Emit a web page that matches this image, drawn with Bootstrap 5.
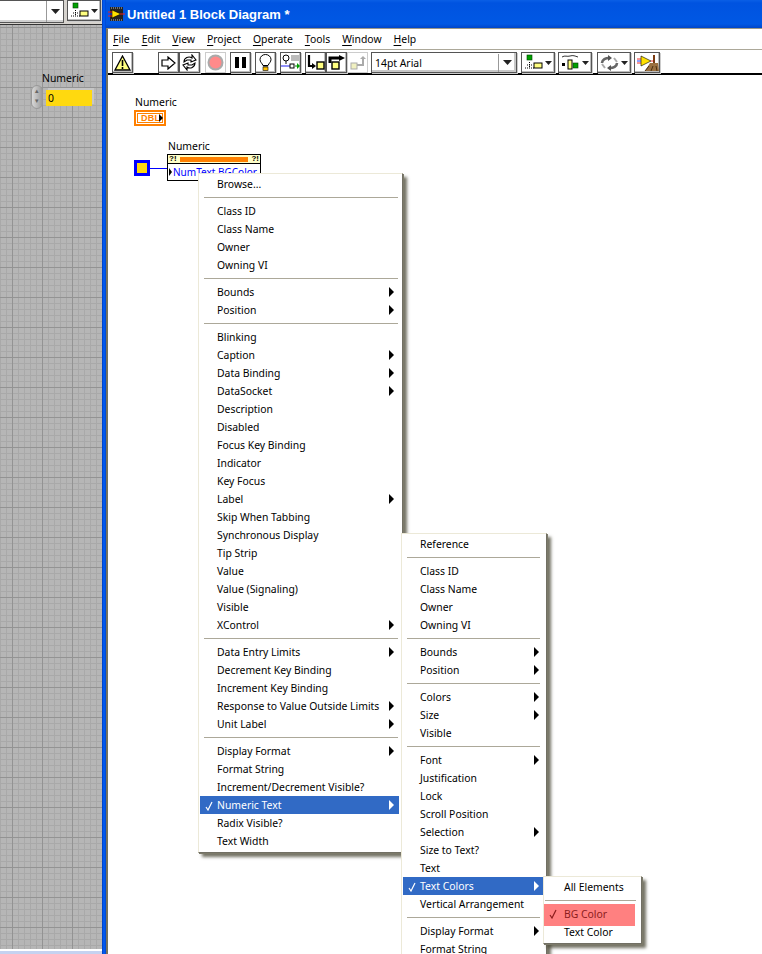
<!DOCTYPE html>
<html lang="en"><head><meta charset="utf-8"><title>Untitled 1 Block Diagram</title>
<link href="https://cdn.jsdelivr.net/npm/bootstrap@5.3.0/dist/css/bootstrap.min.css" rel="stylesheet">
<style>
html,body{margin:0;height:954px;overflow:hidden;background:#fff}
body{font:10.4px/18px "Noto Sans",sans-serif;color:#000;position:relative;width:762px}
.lv-left{width:102px;height:954px;flex:none;background:#c5d2f0}
.lv-topbar{height:25px;background:#d6d3ce;border-bottom:1px solid #333;padding-right:1px}
.lv-field{width:64px;height:23px;background:#fff;border:1px solid #555;border-left:0;display:flex;justify-content:flex-end;box-shadow:inset 0 -2px #d0d0d0}
.lv-arrow{width:17px;border-left:1px solid #999;display:flex;align-items:center;justify-content:center}
.lv-grid{height:924px;background-color:#b6b6b6;background-image:linear-gradient(#939393 1px,transparent 1px),linear-gradient(90deg,#939393 1px,transparent 1px),linear-gradient(#a9a9a9 1px,transparent 1px),linear-gradient(90deg,#a9a9a9 1px,transparent 1px);background-size:30px 30px,30px 30px,6px 6px,6px 6px;background-position:0 2px,12px 0,0 2px,0 0;position:relative}
.lv-endstrip{height:2px;background:#fff}
.lv-win{flex:1;height:954px;background:linear-gradient(#0a5fe6,#0053e0 3px,#0058e4 24px,#0046c8 28px);position:relative}
.lv-edge{position:absolute;inset:0 auto 0 0;width:4px;background:linear-gradient(90deg,#0033a8 0,#0058ee 1px,#0058ee 3px,#0040c0)}
.lv-title{height:28px;padding:1px 0 0 6px;gap:2px;color:#fff;font:bold 13px/27px "Liberation Sans",sans-serif}
.lv-body{position:absolute;left:4px;right:0;top:28px;bottom:0;background:#fff;border-left:2px solid #75735f;border-top:1px solid #9a9888}
.lv-menubar{height:21px;border-bottom:1px solid #aca899;gap:12px;padding-left:5px;line-height:20px}
.lv-menubar u{text-underline-offset:2px}
.lv-tools{height:25px;border-bottom:2px solid #000;padding:2px 0 0 4px;align-items:flex-start;background:#fff}
.tb{height:21px;width:21px;border:1px solid #555;box-shadow:inset -1px -1px #bdbdbd,1px 1px #ccc;background:#fff;flex:none;display:flex;align-items:center;justify-content:center}
.tb.off{border-color:#ccc;box-shadow:none}
.tb svg{display:block}
.g1{margin-left:25px}.g2{margin-left:5px}.g3{margin-left:4px}.g4{margin-left:3px}
.g5{margin-left:3px}
.tb-font{width:146px;justify-content:flex-start;padding-left:3px;line-height:18px;box-shadow:inset -2px -2px #c8c8c8,1px 1px #ccc}
.tb-font span{flex:1}
.tb-font i{width:17px;height:18px;border-left:1px solid #999;display:flex;align-items:center;justify-content:center;margin-right:1px}
.tb-drop{width:34px;gap:2px}
.tb-cl{width:26px}
.lv-canvas{position:absolute;left:0;right:0;top:47px;bottom:0}
.node{position:absolute}
.nlabel{line-height:13px}
.dbl{width:32px;height:16px;border:2px solid #ff8000;padding:1px;background:#fff;display:flex;align-items:center}
.dbl b{font:bold 9px/8px "Liberation Sans",sans-serif;color:#ff8000;letter-spacing:.3px;border:1px solid #ff8000;flex:1;padding-left:3px;height:10px;background:#fff}
.dbl i{width:0;height:0;border:4px solid transparent;border-left:4px solid #000;border-right:0;margin-left:-4px}
.term{width:16px;height:16px;border:3px solid #0000ff;background:#ffd90f}
.wire{width:18px;height:1px;background:#0000ff}
.prop{width:94px;height:27px;border:1px solid #000;background:#fff}
.prop-h{height:8px;background:#ffffc8;border-bottom:1px solid #000;display:flex;align-items:center;box-sizing:content-box;font:bold 8px/8px "Liberation Sans",sans-serif;padding:0 1px;justify-content:space-between}
.prop-h i{display:block;height:5px;width:68px;background:#ff8000}
.prop-r{color:#0000ff;line-height:16px;padding-left:1px;display:flex;align-items:center;gap:1px;font-size:10px}
.prop-r i{width:0;height:0;border:4px solid transparent;border-left:3px solid #000;border-right:0}
.sp{width:12px;height:24px;border-radius:6px;background:linear-gradient(90deg,#d8d8d8,#9d9d9d);border:1px solid #999;font-size:7px;line-height:10px;text-align:center;color:#666}
.dsp{width:46px;height:16px;background:#ffd90f;padding-left:2px;line-height:17px;box-shadow:2px -2px 0 #c6c6c6}
.wxmenu.dropdown-menu{display:block;position:absolute;border-radius:0;border:1px solid #ece9d8;border-right-color:#716f64;border-bottom-color:#716f64;background:#fff;padding:1px 3px 2px 1px;margin:0;min-width:0;font-size:10.4px;box-shadow:1px 1px 0 #7c7a6a,4px 4px 3px rgba(70,68,50,.75);color:#000}
.wxmenu .dropdown-item{height:18px;line-height:19px;padding:0 0 0 17px;color:#000;position:relative;white-space:nowrap;background:transparent}
.wxmenu .dropdown-divider{margin:4px;height:1px;border:0;background:#aca899;opacity:1}
.m1 .dropdown-divider{margin-right:1px}
.sub::after{content:"";position:absolute;right:5px;top:4px;border:5px solid transparent;border-left:5px solid #000;border-right:0}
.wxmenu .dropdown-item.act{background:#316ac5;color:#fff}
.act.sub::after{border-left-color:#fff}
.ck{position:absolute;left:5px;top:5px}
.m1{left:198px;top:173px;width:205px}
.m2{left:401px;top:533px;width:146px;height:430px;padding-right:2px!important}
.m3{left:543px;top:876px;width:99px;padding-left:0!important;padding-right:6px!important}
.m3 .dropdown-item{padding-left:20px}
.m3 .dropdown-divider{margin-left:1px;margin-right:-1px}
.wxmenu .dropdown-item.pink{background:#ff8080;color:#8c1c1c;height:22px;line-height:21px;margin-top:-1px;margin-bottom:-3px}
.m3 .tail{z-index:1}
</style></head><body>
<div class="d-flex">
<div class="lv-left">
 <div class="lv-topbar d-flex justify-content-between">
  <div class="lv-field"><div class="lv-arrow"><svg width="9" height="5"><path d="M0 0h9L4.500 5z" fill="#222"/></svg></div></div>
  <div class="tb tb-drop"><svg width="19" height="17" viewBox="0 0 19 17"><rect x="3" y="1" width="5" height="5" fill="#00a000" stroke="#004000" stroke-width=".6"/><path d="M5.500 8v6M3 11h5M1 14h10" stroke="#000" stroke-dasharray="1 1" fill="none"/><rect x="10" y="9" width="8" height="5" fill="#ffff80" stroke="#000"/></svg><svg width="7" height="4"><path d="M0 0h7L3.500 4z" fill="#222"/></svg></div>
 </div>
 <div class="lv-grid">
  <div class="node nlabel" style="left:42px;top:47px">Numeric</div>
  <div class="node sp" style="left:31px;top:60px">▴<br>▾</div>
  <div class="node dsp" style="left:46px;top:65px">0</div>
 </div>
 <div class="lv-endstrip"></div>
</div>
<div class="lv-win">
 <div class="lv-edge"></div>
 <div class="lv-title d-flex align-items-center">
  <svg width="17" height="15" viewBox="0 0 17 15"><rect x="2" y="0" width="13" height="14" fill="#222"/><path d="M3 1h11M3 13h11" stroke="#bbb" stroke-dasharray="1 1"/><path d="M4 3l9 4-9 4z" fill="#ffe000" stroke="#000" stroke-width=".6"/><path d="M0 5h4M0 9h4" stroke="#f02020"/><path d="M0 7h4" stroke="#2040ff"/><path d="M12 7h5" stroke="#f02020"/></svg>
  <span>Untitled 1 Block Diagram *</span>
 </div>
 <div class="lv-body">
  <div class="lv-menubar d-flex">
   <span><u>F</u>ile</span><span><u>E</u>dit</span><span><u>V</u>iew</span><span><u>P</u>roject</span><span><u>O</u>perate</span><span><u>T</u>ools</span><span><u>W</u>indow</span><span><u>H</u>elp</span>
  </div>
  <div class="lv-tools d-flex">
   <div class="tb"><svg width="17" height="16" viewBox="0 0 17 16"><path d="M8.500 1L16 15H1z" fill="#ffff80" stroke="#000" stroke-width="1.300"/><path d="M8.500 5v6M8.500 12v2" stroke="#000" stroke-width="1.600"/></svg></div>
   <div class="tb g1"><svg width="15" height="14" viewBox="0 0 15 14"><path d="M1 4h6V1l7 6-7 6v-3H1z" fill="#fff" stroke="#000" stroke-width="1.200"/></svg></div>
   <div class="tb"><svg width="17" height="17" viewBox="0 0 17 17"><path d="M3 8a5 5 0 0 1 8-4V1l4 5-5 2V6H6L3 8zM14 9a5 5 0 0 1-8 4v3l-4-5 5-2v2h4l3-2z" fill="#fff" stroke="#000" stroke-width="1.100"/></svg></div>
   <div class="tb off g2"><svg width="17" height="17" viewBox="0 0 17 17"><circle cx="8.500" cy="8.500" r="7" fill="#ff8a8a" stroke="#aaa" stroke-width="2"/></svg></div>
   <div class="tb g3"><svg width="11" height="11"><rect x="0" y="0" width="4" height="11" fill="#000"/><rect x="7" y="0" width="4" height="11" fill="#000"/></svg></div>
   <div class="tb g3"><svg width="13" height="17" viewBox="0 0 13 17"><path d="M4 11.500C3 9 1 8 1 5.500a5.500 5 0 0 1 11 0c0 2.500-2 3.500-3 6z" fill="#fff" stroke="#000"/><path d="M4 12h5" stroke="#000"/><rect x="4" y="13" width="5" height="3.500" fill="#ffc000" stroke="#000" stroke-width=".6"/></svg></div>
   <div class="tb g3"><svg width="19" height="17" viewBox="0 0 19 17"><circle cx="5" cy="4" r="3" fill="#fff" stroke="#000"/><path d="M5 7v3" stroke="#000"/><rect x="10" y="1" width="8" height="6" fill="#bbb"/><path d="M0 12h10" stroke="#2020f0"/><rect x="9" y="10" width="4" height="4" fill="#fff" stroke="#000"/><path d="M14 12h2" stroke="#008000"/><path d="M16 9l3 3-3 3z" fill="#00a000"/></svg></div>
   <div class="tb g3"><svg width="18" height="16" viewBox="0 0 18 16"><path d="M2 0v11h5" fill="none" stroke="#000" stroke-width="2.200"/><path d="M5 8l4 3-4 3z" fill="#000"/><rect x="10" y="7" width="7" height="7" fill="#ffff80" stroke="#000" stroke-width="1.400"/></svg></div>
   <div class="tb"><svg width="18" height="16" viewBox="0 0 18 16"><path d="M2 8V3h10" fill="none" stroke="#000" stroke-width="3"/><path d="M11 0l6 3-6 3z" fill="#000"/><rect x="4" y="7" width="7" height="7" fill="#ffff80" stroke="#000" stroke-width="1.400"/></svg></div>
   <div class="tb off"><svg width="18" height="16" viewBox="0 0 18 16"><rect x="2" y="8" width="6" height="6" fill="#f0f0c0" stroke="#aaa"/><path d="M8 10h6V3" fill="none" stroke="#aaa" stroke-width="2"/><path d="M11 4l3-3 3 3z" fill="#aaa"/></svg></div>
   <div class="tb tb-font g4"><span>14pt Arial</span><i><svg width="9" height="5"><path d="M0 0h9L4.500 5z" fill="#222"/></svg></i></div>
   <div class="tb tb-drop g3"><svg width="19" height="17" viewBox="0 0 19 17"><rect x="3" y="1" width="5" height="5" fill="#00a000" stroke="#004000" stroke-width=".6"/><path d="M5.500 8v6M3 11h5M1 14h10" stroke="#000" stroke-dasharray="1 1" fill="none"/><rect x="10" y="9" width="8" height="5" fill="#ffff80" stroke="#000"/></svg><svg width="7" height="4"><path d="M0 0h7L3.500 4z" fill="#222"/></svg></div>
   <div class="tb tb-drop g5"><svg width="19" height="17" viewBox="0 0 19 17"><path d="M1 3c3-2 5 0 8-1s5 0 8 1" fill="none" stroke="#000" stroke-width=".8"/><rect x="1" y="9" width="3" height="3" fill="#000"/><rect x="7" y="6" width="4" height="9" fill="#ffff80" stroke="#000"/><rect x="12" y="9" width="5" height="5" fill="#00a000" stroke="#004000" stroke-width=".6"/></svg><svg width="7" height="4"><path d="M0 0h7L3.500 4z" fill="#222"/></svg></div>
   <div class="tb tb-drop g2"><svg width="19" height="16" viewBox="0 0 19 16"><path d="M2 8a7 5 0 0 1 8-5M17 8a7 5 0 0 1-8 5" fill="none" stroke="#666" stroke-width="2.600"/><path d="M8 0L12 3l-4 3zM11 10l-4 3 4 3z" fill="#555"/><path d="M14 3l3 4M5 13l-3-4" stroke="#aaa" stroke-width="2"/></svg><svg width="7" height="4"><path d="M0 0h7L3.500 4z" fill="#222"/></svg></div>
   <div class="tb tb-cl g4"><svg width="23" height="18" viewBox="0 0 23 18"><path d="M1 5h5M1 9h5" stroke="#f03030"/><path d="M1 7h5" stroke="#2040ff"/><path d="M5 2l10 5-10 5z" fill="#ffe000" stroke="#000" stroke-width=".6"/><path d="M15 7h3" stroke="#f03030"/><path d="M18 1v8" stroke="#7a3a10" stroke-width="2"/><path d="M14 9h8l1 8H9z" fill="#9a7040"/><path d="M13 12l-4 5M17 12l-2 5M20 12l1 5" stroke="#4a3010"/></svg></div>
  </div>
  <div class="lv-canvas">
   <div class="node nlabel" style="left:27px;top:20px">Numeric</div>
   <div class="node dbl" style="left:26px;top:34px"><b>DBL</b><i></i></div>
   <div class="node nlabel" style="left:60px;top:64px">Numeric</div>
   <div class="node term" style="left:26px;top:84px"></div>
   <div class="node wire" style="left:42px;top:92px"></div>
   <div class="node prop" style="left:59px;top:78px">
    <div class="prop-h">?!<i></i>?!</div>
    <div class="prop-r"><i></i>NumText.BGColor</div>
   </div>
  </div>
 </div>
</div>
</div>

<div class="dropdown-menu wxmenu m1">
 <a class="dropdown-item">Browse...</a><hr class="dropdown-divider">
 <a class="dropdown-item">Class ID</a><a class="dropdown-item">Class Name</a><a class="dropdown-item">Owner</a><a class="dropdown-item">Owning VI</a><hr class="dropdown-divider">
 <a class="dropdown-item sub">Bounds</a><a class="dropdown-item sub">Position</a><hr class="dropdown-divider">
 <a class="dropdown-item">Blinking</a><a class="dropdown-item sub">Caption</a><a class="dropdown-item sub">Data Binding</a><a class="dropdown-item sub">DataSocket</a><a class="dropdown-item">Description</a><a class="dropdown-item">Disabled</a><a class="dropdown-item">Focus Key Binding</a><a class="dropdown-item">Indicator</a><a class="dropdown-item">Key Focus</a><a class="dropdown-item sub">Label</a><a class="dropdown-item">Skip When Tabbing</a><a class="dropdown-item">Synchronous Display</a><a class="dropdown-item">Tip Strip</a><a class="dropdown-item">Value</a><a class="dropdown-item">Value (Signaling)</a><a class="dropdown-item">Visible</a><a class="dropdown-item sub">XControl</a><hr class="dropdown-divider">
 <a class="dropdown-item sub">Data Entry Limits</a><a class="dropdown-item">Decrement Key Binding</a><a class="dropdown-item">Increment Key Binding</a><a class="dropdown-item sub">Response to Value Outside Limits</a><a class="dropdown-item sub">Unit Label</a><hr class="dropdown-divider">
 <a class="dropdown-item sub">Display Format</a><a class="dropdown-item">Format String</a><a class="dropdown-item">Increment/Decrement Visible?</a>
 <a class="dropdown-item sub act"><svg class="ck" width="8" height="10" viewBox="0 0 8 10"><path d="M1 6l2 3 4-8" fill="none" stroke="#fff" stroke-width="1.200"/></svg>Numeric Text</a>
 <a class="dropdown-item">Radix Visible?</a><a class="dropdown-item">Text Width</a>
</div>
<div class="dropdown-menu wxmenu m2">
 <a class="dropdown-item">Reference</a><hr class="dropdown-divider">
 <a class="dropdown-item">Class ID</a><a class="dropdown-item">Class Name</a><a class="dropdown-item">Owner</a><a class="dropdown-item">Owning VI</a><hr class="dropdown-divider">
 <a class="dropdown-item sub">Bounds</a><a class="dropdown-item sub">Position</a><hr class="dropdown-divider">
 <a class="dropdown-item sub">Colors</a><a class="dropdown-item sub">Size</a><a class="dropdown-item">Visible</a><hr class="dropdown-divider">
 <a class="dropdown-item sub">Font</a><a class="dropdown-item">Justification</a><a class="dropdown-item">Lock</a><a class="dropdown-item">Scroll Position</a><a class="dropdown-item sub">Selection</a><a class="dropdown-item">Size to Text?</a><a class="dropdown-item">Text</a>
 <a class="dropdown-item sub act"><svg class="ck" width="8" height="10" viewBox="0 0 8 10"><path d="M1 6l2 3 4-8" fill="none" stroke="#fff" stroke-width="1.200"/></svg>Text Colors</a>
 <a class="dropdown-item">Vertical Arrangement</a><hr class="dropdown-divider">
 <a class="dropdown-item sub">Display Format</a><a class="dropdown-item">Format String</a>
</div>
<div class="dropdown-menu wxmenu m3">
 <a class="dropdown-item">All Elements</a><hr class="dropdown-divider">
 <a class="dropdown-item pink"><svg class="ck" width="8" height="10" viewBox="0 0 8 10"><path d="M1 6l2 3 4-8" fill="none" stroke="#8c1c1c" stroke-width="1.200"/></svg>BG Color</a>
 <a class="dropdown-item tail">Text Color</a>
</div>
</body></html>
